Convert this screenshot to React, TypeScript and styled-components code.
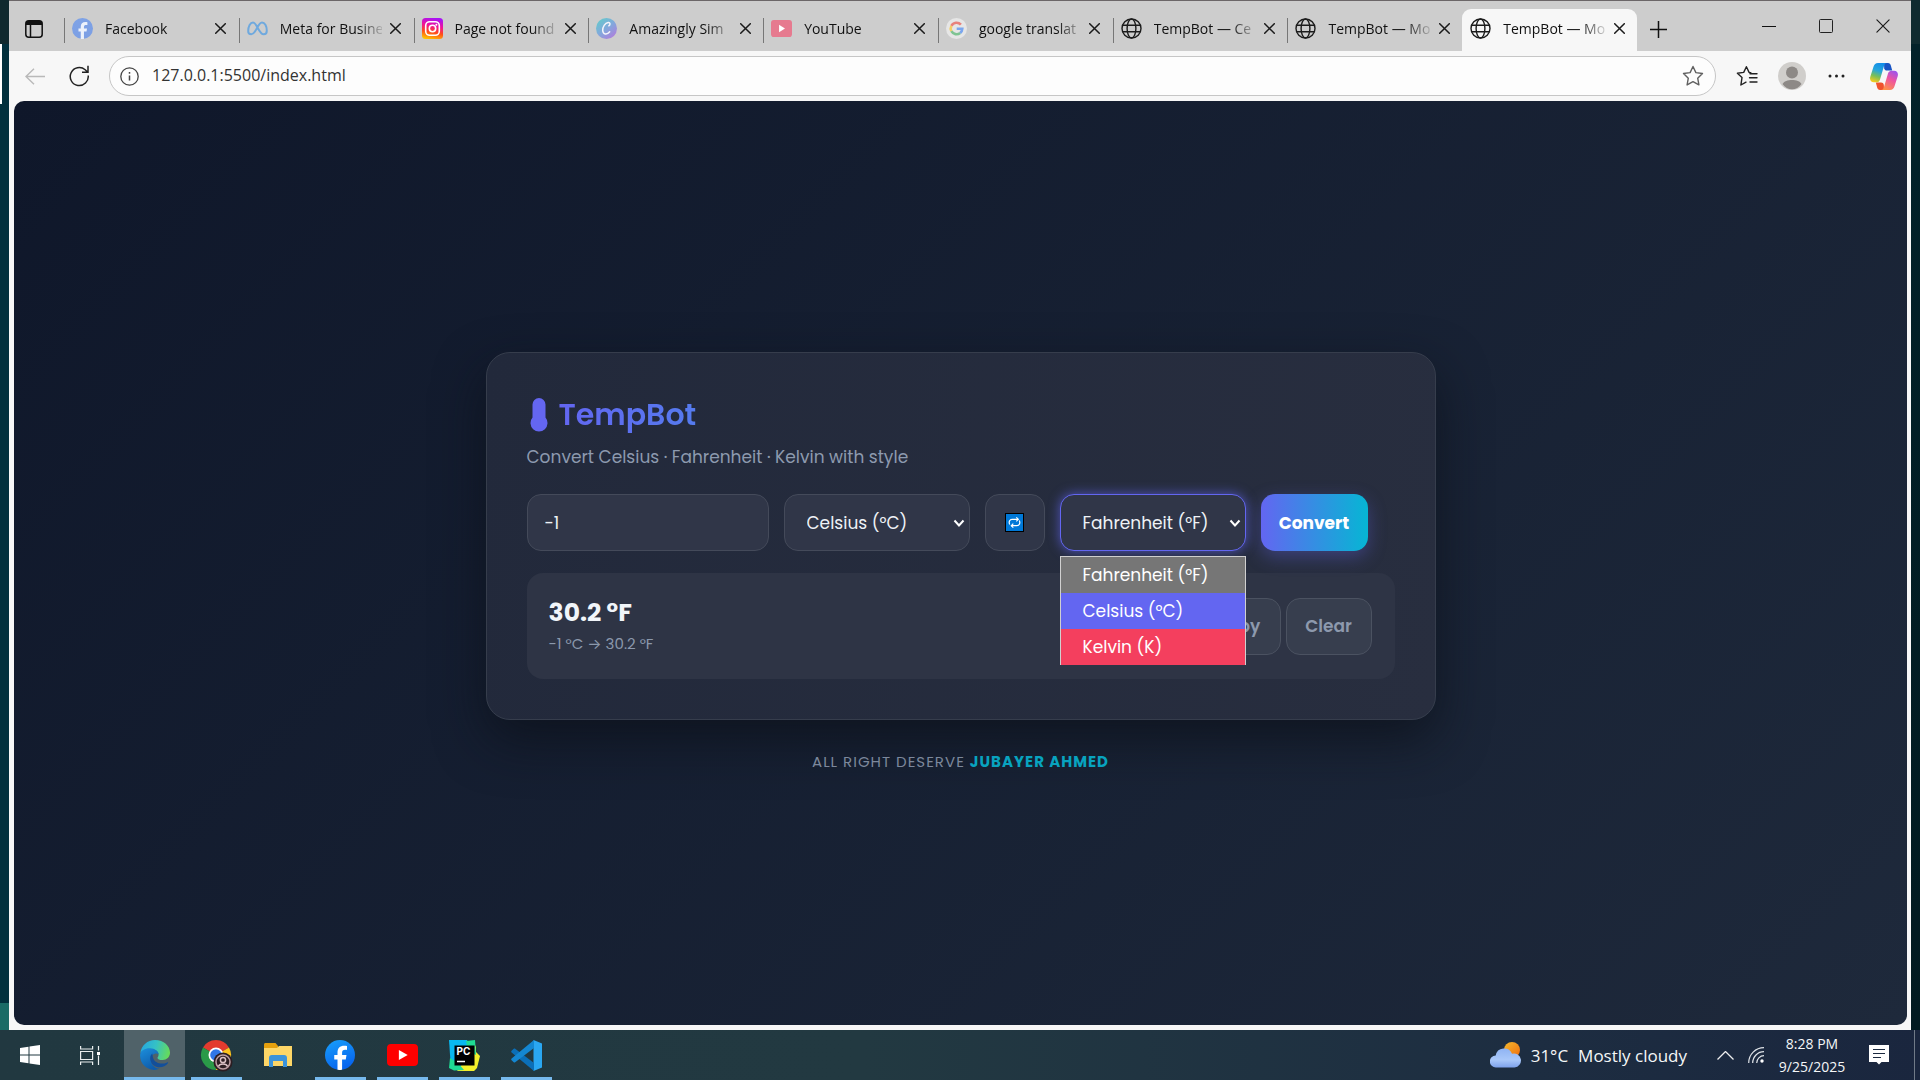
import React, { useState } from "react";
import styled, { createGlobalStyle, css } from "styled-components";

const ui = `"Segoe UI", "Open Sans", "Noto Sans", sans-serif`;
const brand = `Poppins, Inter, "Open Sans", sans-serif`;

const Global = createGlobalStyle`
  *, *::before, *::after { box-sizing: border-box; }
  html, body, #root { height: 100%; }
  body { margin: 0; background: #02262f; font-family: ${ui}; overflow: hidden; }
  button, input, select { font: inherit; color: inherit; margin: 0; }
  button { border: 0; background: none; padding: 0; cursor: pointer; }
  svg { display: block; flex: none; }
`;

/* ---------- desktop ---------- */
const Desktop = styled.div`
  height: 100%;
  display: flex;
  flex-direction: column;
`;
const Stage = styled.div`
  flex: 1;
  min-height: 0;
  display: flex;
`;
const Edge = styled.div<{ $side: "left" | "right" }>`
  width: 9px;
  background: ${(p) =>
    p.$side === "left"
      ? "linear-gradient(90deg, #fff 2px, transparent 2px) 0 44px / 100% 60px no-repeat, linear-gradient(#10292e 44px, #02303d 44px, #02303d calc(100% - 27px), #1a6b66 calc(100% - 27px))"
      : "linear-gradient(#0f2b30 44px, #02222a 44px, #011a20)"};
`;
const Window = styled.div`
  flex: 1;
  min-width: 0;
  display: flex;
  flex-direction: column;
  background: #f7f7f7;
  border-top: 1px solid #6b6668;
`;

/* ---------- tab strip ---------- */
const TabStrip = styled.div`
  height: 50px;
  display: flex;
  background: #cdcdcd;
`;
const StripButton = styled.button<{ $w: number; $low?: boolean }>`
  width: ${(p) => p.$w}px;
  height: 100%;
  padding-top: ${(p) => (p.$low ? 6 : 0)}px;
  display: grid;
  place-items: center;
`;
const TabList = styled.div`
  display: flex;
  align-items: flex-end;
  flex: 0 1 1573px;
  min-width: 0;
  margin-left: 5px;
`;
const Tab = styled.div<{ $active?: boolean }>`
  position: relative;
  flex: 1 1 0;
  min-width: 0;
  height: 42px;
  padding: 0 8px 4px 8px;
  display: flex;
  align-items: center;
  gap: 4px;
  font-size: 14px;
  color: #111;
  &::before {
    content: "";
    position: absolute;
    left: 0;
    top: 9px;
    height: 25px;
    border-left: 1px solid #777;
  }
  ${(p) =>
    p.$active &&
    css`
      background: #f7f7f7;
      border-radius: 9px 9px 0 0;
      &::before { display: none; }
    `}
`;
const TabTitle = styled.span`
  flex: 1;
  min-width: 0;
  margin-left: 8px;
  overflow: hidden;
  white-space: nowrap;
  mask-image: linear-gradient(90deg, #000 calc(100% - 24px), rgba(0, 0, 0, 0.15));
`;
const TabClose = styled.button`
  width: 20px;
  height: 22px;
  display: grid;
  place-items: center;
  flex: none;
`;
const WindowButtons = styled.div`
  margin-left: auto;
  display: flex;
`;

/* ---------- toolbar ---------- */
const Toolbar = styled.div`
  height: 50px;
  display: flex;
  align-items: center;
  padding: 0 3px 0 3px;
`;
const ToolButton = styled.button<{ $w?: number }>`
  width: ${(p) => p.$w ?? 45}px;
  height: 40px;
  display: grid;
  place-items: center;
  flex: none;
`;
const AddressBar = styled.div`
  flex: 1;
  min-width: 0;
  height: 40px;
  margin: 0 8px 0 7px;
  padding: 0 11px 0 10px;
  display: flex;
  align-items: center;
  gap: 13px;
  background: #fdfdfd;
  border: 1px solid #c6c6c6;
  border-radius: 20px;
`;
const Address = styled.input`
  flex: 1;
  min-width: 0;
  border: 0;
  padding: 0 0 2px;
  outline: 0;
  background: none;
  font-size: 16px;
  color: #333;
`;

/* ---------- page ---------- */
const Viewport = styled.main`
  flex: 1;
  min-height: 0;
  margin: 0 4px 5px 5px;
  border-radius: 10px;
  overflow: hidden;
  display: flex;
  flex-direction: column;
  align-items: center;
  justify-content: center;
  background: linear-gradient(135deg, #0f172a, #1e293b);
  color: #f1f5f9;
  font-family: ${brand};
`;
const Card = styled.section`
  width: 950px;
  max-width: 100%;
  padding: 40px;
  background: linear-gradient(100deg, #22293b, #282e3f);
  border: 1px solid #363d4c;
  border-radius: 24px;
  box-shadow: 0 20px 50px rgba(12, 15, 24, 0.7);
`;
const Title = styled.h1`
  margin: 0;
  display: flex;
  align-items: center;
  gap: 11px;
  height: 44px;
  padding-left: 3px;
  font-size: 30px;
  line-height: 44px;
  font-weight: 600;
`;
const TitleText = styled.span`
  background: linear-gradient(90deg, #6366f1, #557bee);
  background-clip: text;
  color: transparent;
`;
const Subtitle = styled.p`
  margin: 7px 0 24px;
  font-size: 17px;
  line-height: 26px;
  color: #8d9aaf;
`;
const Controls = styled.form`
  display: flex;
  gap: 15px;
`;
const field = css`
  height: 57px;
  background: #303648;
  border: 1px solid #444a5a;
  border-radius: 14px;
  font-size: 17px;
  color: #eef2f6;
  outline: 0;
`;
const ValueInput = styled.input`
  ${field}
  width: 242px;
  padding: 0 17px;
`;
const SelectWrap = styled.div`
  position: relative;
  width: 186px;
`;
const Select = styled.select<{ $open?: boolean }>`
  ${field}
  appearance: none;
  width: 100%;
  padding: 0 22px;
  ${(p) =>
    p.$open &&
    css`
      border-color: #6366f1;
      box-shadow: 0 0 12px rgba(99, 102, 241, 0.7);
    `}
`;
const Chevron = styled.svg`
  position: absolute;
  right: 5px;
  top: 25px;
  pointer-events: none;
`;
const Popup = styled.ul`
  position: absolute;
  z-index: 2;
  left: 0;
  right: 0;
  top: 62px;
  margin: 0;
  padding: 0;
  list-style: none;
  border: 1px solid #d0d0d0;
  border-bottom: 0;
`;
const Option = styled.li<{ $bg: string }>`
  height: 36px;
  padding: 0 22px;
  line-height: 36px;
  font-size: 17px;
  color: #fff;
  background: ${(p) => p.$bg};
`;
const SwapButton = styled.button`
  ${field}
  width: 60px;
  display: grid;
  place-items: center;
`;
const ConvertButton = styled.button`
  width: 107px;
  height: 57px;
  border-radius: 14px;
  background: linear-gradient(90deg, #6366f1, #06b6d4);
  box-shadow: 0 6px 18px rgba(99, 102, 241, 0.35);
  font-size: 17px;
  font-weight: 700;
  color: #fff;
`;
const Result = styled.div`
  margin-top: 22px;
  padding: 22px 23px 22px 22px;
  min-height: 106px;
  display: flex;
  align-items: center;
  justify-content: space-between;
  background: #2e3445;
  border-radius: 16px;
`;
const ResultValue = styled.output`
  display: block;
  font-size: 25px;
  line-height: 36px;
  font-weight: 700;
`;
const ResultNote = styled.small`
  display: block;
  font-size: 15px;
  line-height: 26px;
  color: #8b98ac;
`;
const Actions = styled.div`
  display: flex;
  gap: 5px;
`;
const GhostButton = styled.button`
  ${field}
  width: 86px;
  background: #373e4e;
  border-color: #4b5261;
  font-weight: 600;
  color: #8d99ad;
`;
const Footer = styled.footer`
  margin-top: 30px;
  font-size: 15px;
  line-height: 24px;
  letter-spacing: 1px;
  color: #7c889c;
`;
const Author = styled.strong`
  font-weight: 700;
  color: #08a3bf;
`;

/* ---------- taskbar ---------- */
const Taskbar = styled.footer`
  height: 50px;
  display: flex;
  background: linear-gradient(90deg, #213840 0%, #223941 45%, #1d2d41 80%, #1a263e 100%);
  color: #f5f7f8;
`;
const SystemButtons = styled.div`
  display: flex;
  margin-right: 4px;
`;
const TaskButton = styled.button<{ $running?: boolean; $active?: boolean; $w?: number }>`
  width: ${(p) => p.$w ?? 62}px;
  height: 50px;
  display: grid;
  place-items: center;
  ${(p) =>
    p.$running &&
    css`
      background: linear-gradient(#76b9ed, #76b9ed) center bottom / 51px 3px no-repeat;
    `}
  ${(p) =>
    p.$active &&
    css`
      background: linear-gradient(#76b9ed, #76b9ed) center bottom / 100% 3px no-repeat, #506269;
    `}
`;
const Tray = styled.div`
  margin-left: auto;
  display: flex;
  align-items: center;
`;
const Weather = styled.button`
  display: flex;
  align-items: center;
  gap: 10px;
  margin-right: 28px;
  font-size: 17px;
`;
const TrayIcon = styled.button<{ $w: number }>`
  width: ${(p) => p.$w}px;
  height: 50px;
  display: grid;
  place-items: center;
`;
const Clock = styled.time`
  width: 70px;
  font-size: 14px;
  line-height: 23px;
  text-align: center;
`;
const ShowDesktop = styled.button`
  width: 6px;
  height: 50px;
  margin-left: 3px;
  border-left: 1px solid #707a87;
`;

/* ---------- icons ---------- */
const Globe = () => (
  <svg width="21" height="21" viewBox="0 0 21 21" fill="none" stroke="#1c1c1c" strokeWidth="1.4">
    <circle cx="10.5" cy="10.5" r="9.5" />
    <ellipse cx="10.5" cy="10.5" rx="4.4" ry="9.5" />
    <path d="M1.8 7.2h17.4M1.8 13.8h17.4" />
  </svg>
);
const Cross = ({ size = 11, w = 1.5 }: { size?: number; w?: number }) => (
  <svg width={size} height={size} viewBox="0 0 11 11" stroke="#1a1a1a" strokeWidth={w} strokeLinecap="round">
    <path d="M.7.7l9.6 9.6M10.3.7L.7 10.3" />
  </svg>
);
const FbMark = ({ size, id, from, to }: { size: number; id: string; from: string; to: string }) => (
  <svg width={size} height={size} viewBox="0 0 36 36">
    <defs>
      <linearGradient id={id} x1="0" y1="0" x2=".4" y2="1">
        <stop stopColor={from} />
        <stop offset="1" stopColor={to} />
      </linearGradient>
    </defs>
    <circle cx="18" cy="18" r="18" fill={`url(#${id})`} />
    <path
      fill="#fff"
      fillOpacity={size < 25 ? 0.85 : 1}
      d="M15 35.8V23.3h-3.9V18H15v-2.4c0-6 2.7-8.8 8.2-8.8 1.1 0 2.4.2 3.2.4v4.7c-.5 0-1.3-.1-2.2-.1-2.7 0-3.7 1-3.7 3.7V18h5.3l-.9 5.3h-4.4v12.5c-1.8.3-3.8.3-5.5 0z"
    />
  </svg>
);
const MetaMark = () => (
  <svg width="21" height="15" viewBox="0 0 21 15" fill="none" stroke="#6fa9de" strokeWidth="2">
    <path d="M1.2 10.2C1.2 5.5 3.3 1.5 6 1.5c4 0 5.8 11.8 10.6 11.8 2 0 3.2-1.3 3.2-3.6C19.8 5 17.7 1.5 15 1.5c-4.3 0-6 11.8-10.7 11.8-2 0-3.1-1.2-3.1-3.1z" />
  </svg>
);
const InstaMark = () => (
  <svg width="21" height="21" viewBox="0 0 21 21">
    <defs>
      <linearGradient id="ig" x1=".3" y1="1" x2=".5" y2="0">
        <stop stopColor="#ffc400" />
        <stop offset=".35" stopColor="#ff4a1c" />
        <stop offset=".65" stopColor="#f0129a" />
        <stop offset="1" stopColor="#a813f5" />
      </linearGradient>
    </defs>
    <rect width="21" height="21" rx="3.5" fill="url(#ig)" />
    <rect x="3.7" y="3.7" width="13.6" height="13.6" rx="4" fill="none" stroke="#fff" strokeWidth="1.6" />
    <circle cx="10.5" cy="10.5" r="3.2" fill="none" stroke="#fff" strokeWidth="1.6" />
    <circle cx="14.4" cy="6.7" r="1" fill="#fff" />
  </svg>
);
const CanvaMark = () => (
  <svg width="21" height="21" viewBox="0 0 21 21">
    <defs>
      <linearGradient id="cv" x1=".1" y1=".1" x2=".8" y2="1">
        <stop stopColor="#66c8cd" />
        <stop offset=".5" stopColor="#83a8dc" />
        <stop offset="1" stopColor="#b07ddd" />
      </linearGradient>
    </defs>
    <circle cx="10.5" cy="10.5" r="10.5" fill="url(#cv)" />
    <path d="M12.8 7.8c1.9-1.2 1.4-3.6-.6-3.3C9 5 6.500 9 6.700 12.500c.2 4 4.300 4.700 7 1.300" fill="none" stroke="#f4f4fb" strokeWidth="1.5" strokeLinecap="round" />
  </svg>
);
const YtMark = ({ w, h, fill }: { w: number; h: number; fill: string }) => (
  <svg width={w} height={h} viewBox="0 0 30 22" preserveAspectRatio="none">
    <rect width="30" height="22" rx="4" fill={fill} />
    <path d="M11.5 6v10l8.5-5z" fill="#fff" />
  </svg>
);
const GoogleMark = () => (
  <svg width="21" height="21" viewBox="0 0 21 21" fill="none" strokeWidth="2.6">
    <circle cx="10.5" cy="10.5" r="10.5" fill="#e6e6e6" />
    <path d="M14.9 6.700A5.800 5.800 0 0 0 5.400 7.800" stroke="#e8827b" />
    <path d="M5.400 7.800a5.800 5.800 0 0 0 0 5.400" stroke="#f3cf68" />
    <path d="M5.400 13.200a5.800 5.800 0 0 0 8.800 1.700" stroke="#7fc492" />
    <path d="M14.200 14.900a5.800 5.800 0 0 0 2.100-4.200h-5.600" stroke="#7ba6ee" />
  </svg>
);
const Star = ({ lines }: { lines?: boolean }) => (
  <svg width="22" height="22" viewBox="0 0 22 22" fill="none" stroke={lines ? "#222" : "#606060"} strokeWidth="1.4" strokeLinejoin="round" strokeLinecap="round">
    {lines ? (
      <path d="M14.800 7.800L13.100 7.400 10.400 1.700 7.700 7.400 1.400 8.300l4.600 4.300-1.100 7.400 5.100-2.800M14 8.800h7M13.500 12.800h7.500M14 17h7" />
    ) : (
      <path d="M11 1.500l2.900 6.100 6.600.9-4.800 4.700 1.200 6.700-5.900-3.200-5.900 3.200 1.200-6.700-4.800-4.700 6.600-.9z" />
    )}
  </svg>
);
const CopilotMark = () => (
  <svg width="28" height="27" viewBox="0 0 28 27">
    <defs>
      <linearGradient id="cpa" x1=".6" y1="0" x2=".3" y2="1">
        <stop stopColor="#138de8" />
        <stop offset=".4" stopColor="#26a6dc" />
        <stop offset=".7" stopColor="#7abf57" />
        <stop offset="1" stopColor="#f5cb1d" />
      </linearGradient>
      <linearGradient id="cpb" x1=".8" y1="0" x2=".3" y2="1">
        <stop stopColor="#9b55ee" />
        <stop offset=".45" stopColor="#ee55a0" />
        <stop offset="1" stopColor="#ff9348" />
      </linearGradient>
    </defs>
    <path d="M14 0h4c1.600 0 2.400 1 2.900 2.700L22.200 7.500H17c-1.600 0-2.400-.8-2.800-2.300z" fill="#1854c4" />
    <path d="M14 27h-4c-1.600 0-2.400-1-2.900-2.700L5.800 19.500H11c1.600 0 2.400.8 2.800 2.300z" fill="#f0532d" />
    <path d="M8 0h9c-1.700 0-2.500 1.300-3 3L10 16.500c-.6 2-1.800 2.800-3.800 2.800H4c-3 0-4.600-2.200-3.700-5.500L3.400 4C4.200 1.500 5.700 0 8 0z" fill="url(#cpa)" />
    <path d="M20 27h-9c1.700 0 2.500-1.300 3-3L18 10.500c.6-2 1.800-2.800 3.800-2.800H24c3 0 4.600 2.200 3.700 5.500L24.600 23c-.8 2.500-2.300 4-4.600 4z" fill="url(#cpb)" />
  </svg>
);
const Thermometer = () => (
  <svg width="18" height="34" viewBox="0 0 18 34">
    <path d="M9 0a6.500 6.500 0 0 1 6.500 6.500v13A8.500 8.500 0 1 1 2.500 19.500v-13A6.500 6.500 0 0 1 9 0z" fill="#6466f1" />
  </svg>
);
const SwapIcon = () => (
  <svg width="19" height="19" viewBox="0 0 19 19" fill="none">
    <rect x=".5" y=".5" width="18" height="18" fill="#0078d7" stroke="#000" />
    <g stroke="#fff" strokeWidth="1.2">
      <path d="M4.700 11.400C3.500 9 4.600 6.300 7 6.300h6M14.300 7.600c1.200 2.400.1 5.100-2.300 5.100H6.500" />
      <path d="M11.300 4.300l2 2-2 2M8.300 10.700l-2 2 2 2" />
    </g>
  </svg>
);
const EdgeMark = () => (
  <svg width="30" height="30" viewBox="0 0 30 30">
    <defs>
      <linearGradient id="eg1" x1="0" y1=".3" x2="1" y2=".5">
        <stop stopColor="#25a6e0" />
        <stop offset=".5" stopColor="#35c1c5" />
        <stop offset="1" stopColor="#66db5a" />
      </linearGradient>
      <linearGradient id="eg2" x1="0" y1="0" x2=".5" y2="1">
        <stop stopColor="#1c8fdc" />
        <stop offset="1" stopColor="#0e5cab" />
      </linearGradient>
    </defs>
    <path d="M.3 13C1.400 5.400 7.500 0 15 0c8.800 0 15 6 15 12.600 0 4.600-3.400 7.500-7.300 7.500-3.300 0-5.200-1.100-5.200-2.200 0-.7 1.100-1.200 1.100-3.300 0-3.300-3.700-5.600-8-5.600C6 9 2 10.700.3 13z" fill="url(#eg1)" />
    <path d="M.2 14C.8 10.600 5 8 10.200 8.200c4.700.2 8.200 2.800 8.400 6-1.300-1.700-7.300-.9-7.800 4.300-.4 5.300 4 10.300 8.800 10.100-2 1-3.800 1.400-5.600 1.300C5.500 29.500-.8 22.500.2 14z" fill="url(#eg2)" />
    <path d="M12.300 13.600c-4.300 3.500-1.700 12 4.700 13.400 4.400 1 8.400-.7 10.900-3.700.5-.8 0-1.300-.7-.9-5.800 2.700-11.900.4-13.700-3.500-.9-1.900-.8-3.800-1.200-5.300z" fill="#134f9a" />
  </svg>
);
const ChromeMark = () => (
  <svg width="34" height="34" viewBox="0 0 34 34">
    <path d="M17 17L4 9.500A15 15 0 0 1 30 9.500z" fill="#e33b2e" />
    <path d="M17 17L30 9.500A15 15 0 0 1 17 32z" fill="#fcc31e" />
    <path d="M17 17v15A15 15 0 0 1 4 9.500z" fill="#2a9a48" />
    <circle cx="17" cy="17" r="7.500" fill="#fff" />
    <circle cx="17" cy="17" r="5.800" fill="#3076e8" />
    <circle cx="24" cy="24" r="9.500" fill="#2c1d22" />
    <circle cx="24" cy="24" r="7" fill="none" stroke="#bb9da2" strokeWidth="1.5" />
    <circle cx="24" cy="22" r="2.600" fill="none" stroke="#dcc2c6" strokeWidth="1.5" />
    <path d="M19.500 28.500c1-3.500 8-3.500 9 0" fill="none" stroke="#dcc2c6" strokeWidth="1.5" />
  </svg>
);
const FolderMark = () => (
  <svg width="28" height="24" viewBox="0 0 28 24">
    <path d="M0 1.500C0 .6.600 0 1.500 0h10L14 3v6H0z" fill="#e5a00d" />
    <path d="M0 5h13l2-2h13v20H0z" fill="#fdd667" />
    <path d="M5 24V15c0-1.900.9-3 3-3h12c2.100 0 3 1.100 3 3v9h-4v-6h-10v6z" fill="#3c93da" />
  </svg>
);
const PycharmMark = () => (
  <svg width="31" height="31" viewBox="0 0 31 31">
    <path d="M0 0h18l2 4-8 24-10 1z" fill="#08b8f0" />
    <path d="M20 3h5l2 4v5l4 4-3 12-3 3H8l6-8z" fill="#f3ef2b" />
    <path d="M17 1l9-1 1 15-8-4zM1 18l8 5 6 7-10 .5L0 28z" fill="#1fdb93" />
    <rect x="5.500" y="5.500" width="20" height="20" fill="#000" />
    <text x="7.500" y="15" fill="#fff" fontFamily="Inter, sans-serif" fontSize="10" fontWeight="700">PC</text>
    <path d="M8 21.500h8" stroke="#fff" strokeWidth="1.5" />
  </svg>
);
const CodeMark = () => (
  <svg width="31" height="31" viewBox="0 0 31 31">
    <path d="M22.500 0L31 3.500v24L22.500 31z" fill="#2aa7f2" />
    <path d="M.6 10.800l2.100-2.100c.5-.4 1-.4 1.500 0L23 23v8L.6 12.600c-.6-.6-.6-1.200 0-1.800z" fill="#0b6fb8" />
    <path d="M.6 20.200l2.100 2.100c.5.4 1 .4 1.500 0L23 8V0L.6 18.400c-.6.6-.6 1.200 0 1.800z" fill="#1487d2" />
  </svg>
);
const CloudMark = () => (
  <svg width="31" height="26" viewBox="0 0 31 26">
    <defs>
      <linearGradient id="cl" x1="0" y1="0" x2="0" y2="1">
        <stop stopColor="#8fb3f3" />
        <stop offset=".6" stopColor="#a9c8fa" />
        <stop offset="1" stopColor="#7ea2ec" />
      </linearGradient>
      <linearGradient id="sn" x1="0" y1="0" x2="1" y2="1">
        <stop stopColor="#f4b82c" />
        <stop offset="1" stopColor="#ef6c10" />
      </linearGradient>
    </defs>
    <circle cx="22" cy="8" r="8" fill="url(#sn)" />
    <path d="M6 25.500a6 6 0 0 1-.3-12A8.500 8.500 0 0 1 22 11.800a7 7 0 1 1 2.500 13.700z" fill="url(#cl)" />
  </svg>
);

const tabs = [
  { title: "Facebook", icon: <FbMark size={21} id="fbs" from="#7fa3e6" to="#7c9fe4" /> },
  { title: "Meta for Busine", icon: <MetaMark /> },
  { title: "Page not found", icon: <InstaMark /> },
  { title: "Amazingly Sim", icon: <CanvaMark /> },
  { title: "YouTube", icon: <YtMark w={21} h={17} fill="#e67a8f" /> },
  { title: "google translat", icon: <GoogleMark /> },
  { title: "TempBot — Ce", icon: <Globe /> },
  { title: "TempBot — Mo", icon: <Globe /> },
  { title: "TempBot — Mo", icon: <Globe />, active: true },
];

const UnitChevron = () => (
  <Chevron width="12" height="9" viewBox="0 0 12 9" fill="none" stroke="#fff" strokeWidth="2">
    <path d="M1.500 1.500L6 6.500l4.500-5" />
  </Chevron>
);

const apps = [
  { name: "Microsoft Edge", icon: <EdgeMark />, running: true, active: true },
  { name: "Google Chrome", icon: <ChromeMark />, running: true },
  { name: "File Explorer", icon: <FolderMark /> },
  { name: "Facebook", icon: <FbMark size={30} id="fbl" from="#18a0fb" to="#0866ee" />, running: true },
  { name: "YouTube", icon: <YtMark w={31} h={22} fill="#fe0000" />, running: true },
  { name: "PyCharm", icon: <PycharmMark />, running: true },
  { name: "Visual Studio Code", icon: <CodeMark />, running: true },
];

export default function App() {
  const [value, setValue] = useState("-1");
  return (
    <>
      <Global />
      <Desktop>
        <Stage>
          <Edge $side="left" />
          <Window>
            <TabStrip>
              <StripButton $w={50} $low aria-label="Tab actions">
                <svg width="18" height="18" viewBox="0 0 18 18" fill="none" stroke="#111" strokeWidth="1.5">
                  <rect x=".8" y=".8" width="16.400" height="16.400" rx="3" />
                  <path d="M1 3h16" strokeWidth="4" />
                  <path d="M5.500 5v12" />
                </svg>
              </StripButton>
              <TabList>
                {tabs.map((t, i) => (
                  <Tab key={i} $active={t.active}>
                    {t.icon}
                    <TabTitle>{t.title}</TabTitle>
                    <TabClose aria-label="Close tab"><Cross /></TabClose>
                  </Tab>
                ))}
              </TabList>
              <StripButton $w={42} $low aria-label="New tab">
                <svg width="17" height="17" viewBox="0 0 17 17" stroke="#111" strokeWidth="1.5"><path d="M8.500 0v17M0 8.500h17" /></svg>
              </StripButton>
              <WindowButtons>
                <StripButton $w={57} aria-label="Minimize">
                  <svg width="14" height="14" viewBox="0 0 14 14" stroke="#111"><path d="M0 7.500h14" /></svg>
                </StripButton>
                <StripButton $w={57} aria-label="Maximize">
                  <svg width="14" height="14" viewBox="0 0 14 14" fill="none" stroke="#222"><rect x=".5" y=".5" width="13" height="13" rx="1" /></svg>
                </StripButton>
                <StripButton $w={57} aria-label="Close"><Cross size={14} w={0.9} /></StripButton>
              </WindowButtons>
            </TabStrip>
            <Toolbar>
              <ToolButton aria-label="Back">
                <svg width="20" height="17" viewBox="0 0 20 17" fill="none" stroke="#b9b9b9" strokeWidth="1.4"><path d="M20 8.500H1M9 .7L1 8.500l8 7.800" /></svg>
              </ToolButton>
              <ToolButton aria-label="Reload">
                <svg width="21" height="22" viewBox="0 0 21 22" fill="none" stroke="#222" strokeWidth="1.5"><path d="M19.200 10.500a9 9 0 1 1-3-5.700l2.300 2.200M19 .8v6.400h-6" /></svg>
              </ToolButton>
              <AddressBar>
                <svg width="19" height="19" viewBox="0 0 19 19" fill="none" stroke="#444" strokeWidth="1.3"><circle cx="9.500" cy="9.500" r="8.700" /><path d="M9.500 8.500v5M9.500 5v1.700" strokeWidth="1.5" /></svg>
                <Address aria-label="Address" defaultValue="127.0.0.1:5500/index.html" />
                <Star />
              </AddressBar>
              <ToolButton aria-label="Favorites"><Star lines /></ToolButton>
              <ToolButton aria-label="Profile">
                <svg width="28" height="28" viewBox="0 0 28 28">
                  <circle cx="14" cy="14" r="14" fill="#d0cecb" />
                  <circle cx="14" cy="10.500" r="6" fill="#8d8986" />
                  <path d="M4.500 22c2.500-5.500 16.500-5.500 19 0-4.500 7-14.500 7-19 0z" fill="#8d8986" />
                </svg>
              </ToolButton>
              <ToolButton aria-label="More">
                <svg width="17" height="4" viewBox="0 0 17 4" fill="#222"><circle cx="2" cy="2" r="1.500" /><circle cx="8.500" cy="2" r="1.500" /><circle cx="15" cy="2" r="1.500" /></svg>
              </ToolButton>
              <ToolButton $w={49} aria-label="Copilot"><CopilotMark /></ToolButton>
            </Toolbar>
            <Viewport>
              <Card>
                <Title><Thermometer /><TitleText>TempBot</TitleText></Title>
                <Subtitle>Convert Celsius · Fahrenheit · Kelvin with style</Subtitle>
                <Controls onSubmit={(e) => e.preventDefault()}>
                  <ValueInput aria-label="Temperature" value={value} onChange={(e) => setValue(e.target.value)} />
                  <SelectWrap>
                    <Select aria-label="From unit" defaultValue="c">
                      <option value="c">Celsius (°C)</option>
                    </Select>
                    <UnitChevron />
                  </SelectWrap>
                  <SwapButton type="button" aria-label="Swap units"><SwapIcon /></SwapButton>
                  <SelectWrap>
                    <Select aria-label="To unit" defaultValue="f" $open>
                      <option value="f">Fahrenheit (°F)</option>
                    </Select>
                    <UnitChevron />
                    <Popup>
                      <Option $bg="#767676">Fahrenheit (°F)</Option>
                      <Option $bg="#6366f1">Celsius (°C)</Option>
                      <Option $bg="#f43f5e">Kelvin (K)</Option>
                    </Popup>
                  </SelectWrap>
                  <ConvertButton>Convert</ConvertButton>
                </Controls>
                <Result>
                  <div>
                    <ResultValue>30.2 °F</ResultValue>
                    <ResultNote>-1 °C → 30.2 °F</ResultNote>
                  </div>
                  <Actions>
                    <GhostButton>Copy</GhostButton>
                    <GhostButton>Clear</GhostButton>
                  </Actions>
                </Result>
              </Card>
              <Footer>ALL RIGHT DESERVE <Author>JUBAYER AHMED</Author></Footer>
            </Viewport>
          </Window>
          <Edge $side="right" />
        </Stage>
        <Taskbar>
          <SystemButtons>
            <TaskButton $w={60} aria-label="Start">
              <svg width="20" height="20" viewBox="0 0 20 20" fill="#fff"><path d="M0 3l8.500-1.300v7.800H0zM9.500 1.500L20 0v9.500H9.500zM0 10.500h8.500v7.800L0 17zM9.500 10.500H20V20L9.500 18.500z" /></svg>
            </TaskButton>
            <TaskButton $w={60} aria-label="Task view">
              <svg width="20" height="19" viewBox="0 0 20 19" fill="none" stroke="#e9eeee" strokeWidth="1.2"><path d="M.6 0v3h12V0M.6 19v-3h12v3M.6 5.500h12v8H.6zM18.500 0v4.500M18.500 9.500V19" /><path d="M17 6h3v3h-3z" fill="#fff" stroke="none" /></svg>
            </TaskButton>
          </SystemButtons>
          {apps.map((a) => (
            <TaskButton key={a.name} $w={a.active ? 61 : 62} aria-label={a.name} $running={a.running} $active={a.active}>{a.icon}</TaskButton>
          ))}
          <Tray>
            <Weather><CloudMark /><span>31°C</span><span>Mostly cloudy</span></Weather>
            <TrayIcon $w={20} aria-label="Hidden icons">
              <svg width="17" height="9" viewBox="0 0 17 9" fill="none" stroke="#eee" strokeWidth="1.3"><path d="M.5 8.500l8-8 8 8" /></svg>
            </TrayIcon>
            <TrayIcon $w={42} aria-label="Network">
              <svg width="16" height="16" viewBox="0 0 16 16" fill="none" stroke="#dfe3e8" strokeWidth="1.2"><path d="M.7 16C.7 7.500 7.500.7 16 .7M4.700 16C4.700 9.700 9.700 4.700 16 4.700M8.700 16c0-4 3.300-7.300 7.300-7.300" /><circle cx="14" cy="14" r="1.700" fill="#fff" stroke="none" /></svg>
            </TrayIcon>
            <Clock>8:28 PM<br />9/25/2025</Clock>
            <TrayIcon $w={64} aria-label="Notifications">
              <svg width="20" height="20" viewBox="0 0 20 20"><path d="M0 0h20v17h-7.500L10 19.500 7.500 17H0z" fill="#fff" /><path d="M4 4.500h12M4 8.500h12M4 12.500h8" stroke="#1c2a40" strokeWidth="1.2" /></svg>
            </TrayIcon>
            <ShowDesktop aria-label="Show desktop" />
          </Tray>
        </Taskbar>
      </Desktop>
    </>
  );
}
